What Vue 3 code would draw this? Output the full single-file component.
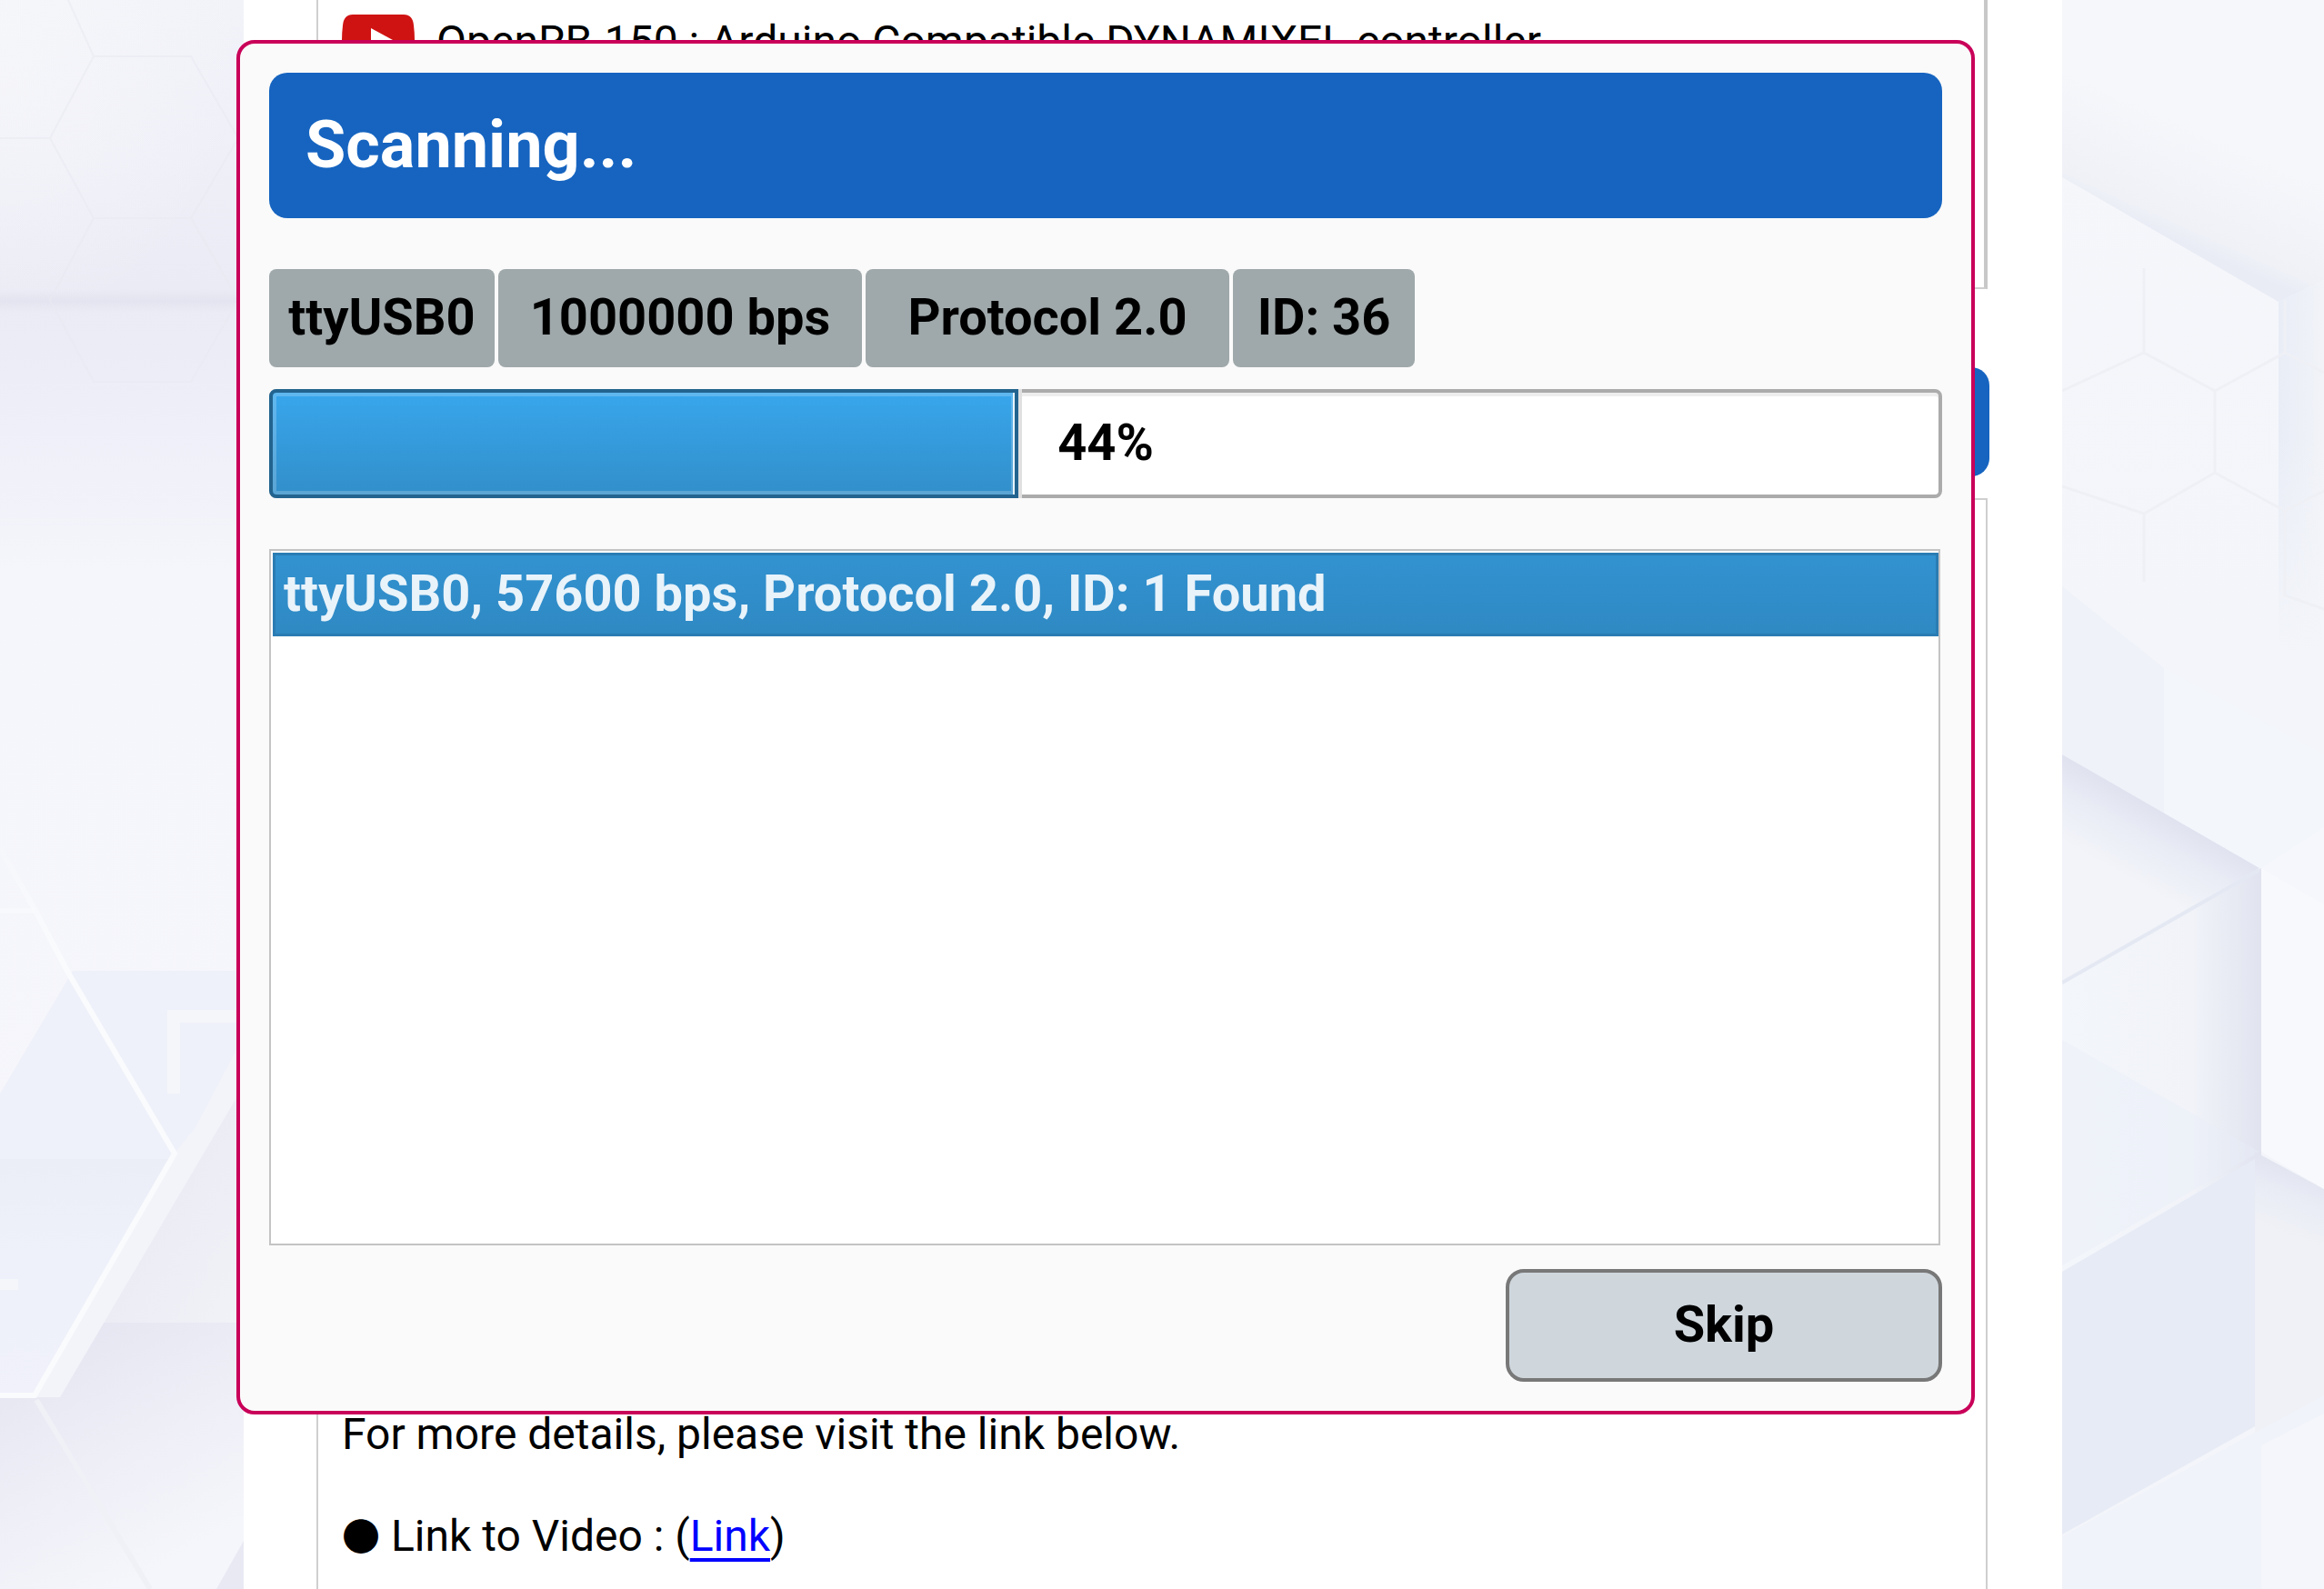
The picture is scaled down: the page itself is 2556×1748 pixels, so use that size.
<script setup>
import { ref, computed } from 'vue'

const port = 'ttyUSB0'
const chips = [
  { text: port, size: 'mid' },
  { text: '1000000 bps', size: 'wide' },
  { text: 'Protocol 2.0', size: 'wide' },
  { text: 'ID: 36', size: 'small' }
]
const progress = ref(44)
const found = ['ttyUSB0, 57600 bps, Protocol 2.0, ID: 1 Found']
const selected = ref(0)
const fillWidth = computed(() => `calc(${progress.value}% + 18px)`)
</script>

<template>
  <div class="screen">
    <svg class="backdrop" viewBox="0 0 268 1748" preserveAspectRatio="xMaxYMin slice" aria-hidden="true">
      <defs>
        <linearGradient id="l-base" x1="0" y1="0" x2="0" y2="1">
          <stop offset="0" stop-color="#f2f3f9" />
          <stop offset=".1" stop-color="#efeff8" />
          <stop offset=".18" stop-color="#ebebf5" />
          <stop offset=".22" stop-color="#ececf7" />
          <stop offset=".27" stop-color="#eeeff8" />
          <stop offset=".36" stop-color="#f5f6fb" />
          <stop offset="1" stop-color="#f6f6fb" />
        </linearGradient>
        <radialGradient id="l-glow" cx="0" cy=".1" r="1">
          <stop offset="0" stop-color="#f7f8fa" stop-opacity=".7" />
          <stop offset="1" stop-color="#f7f8fa" stop-opacity="0" />
        </radialGradient>
        <linearGradient id="l-line" x1="0" y1="0" x2="0" y2="1">
          <stop offset="0" stop-color="#e4e4f0" stop-opacity="0" />
          <stop offset=".5" stop-color="#e4e4f0" />
          <stop offset="1" stop-color="#e4e4f0" stop-opacity="0" />
        </linearGradient>
        <linearGradient id="l-ray" x1="0" y1="933" x2="40" y2="1060" gradientUnits="userSpaceOnUse">
          <stop offset="0" stop-color="#fafbfd" stop-opacity=".2" />
          <stop offset="1" stop-color="#fafbfd" />
        </linearGradient>
        <linearGradient id="l-hex" x1="0" y1="0" x2="0" y2="1">
          <stop offset="0" stop-color="#ebeef7" />
          <stop offset=".4" stop-color="#eef1fa" />
          <stop offset="1" stop-color="#f0f1fa" />
        </linearGradient>
        <linearGradient id="l-side" x1="0" y1="0" x2="1" y2="1">
          <stop offset="0" stop-color="#e9e9f5" />
          <stop offset=".5" stop-color="#ececf5" />
          <stop offset="1" stop-color="#f1f2f7" />
        </linearGradient>
        <linearGradient id="l-floor" x1="0" y1="0" x2=".5" y2="1">
          <stop offset="0" stop-color="#e2e3ef" />
          <stop offset=".4" stop-color="#ebebf5" />
          <stop offset="1" stop-color="#f5f6fb" />
        </linearGradient>
      </defs>
      <rect width="268" height="1748" fill="url(#l-base)" />
      <rect width="268" height="330" fill="url(#l-glow)" />
      <rect y="318" width="268" height="26" fill="url(#l-line)" />
      <path d="M0 152H55L103 62H210L262 152L210 240H103L55 152M103 240L55 330L103 420H210L262 330L210 240M103 62L75 0" fill="none" stroke="#e9e9f2" stroke-width="2" opacity=".6" />
      <path d="M80 1068H268V1203L116 1455H0V1203Z" fill="#eff1fa" />
      <path d="M0 1275H190L40 1534H0Z" fill="url(#l-hex)" />
      <path d="M268 1190V1455H112Z" fill="url(#l-side)" />
      <path d="M114 1455H268V1748H0V1536H66Z" fill="url(#l-floor)" />
      <path d="M192 1269L215 1240L268 1140V1194L66 1537H38Z" fill="#f3f4f9" />
      <g fill="none" stroke="#f5f6fa">
        <path d="M191 1203V1118H268" stroke-width="14" />
        <path d="M0 1413H20" stroke-width="12" />
        <path d="M0 1002H38" stroke-width="5" stroke="#f8f9fc" />
        <path d="M40 1540L165 1748" stroke="#f0f1f7" stroke-width="6" />
        <path d="M0 933L38 1000L75 1070L192 1269L38 1535H0" stroke="url(#l-ray)" stroke-width="6" />
      </g>
      <path d="M268 1695V1748H238Z" fill="#e9e9f4" />
    </svg>

    <main class="page">
      <section class="panel panel-top">
        <svg class="video-icon" viewBox="0 0 80 56" aria-hidden="true">
          <path d="M12 0H68Q78 0 79 12Q81 28 79 44Q78 56 68 56H12Q2 56 1 44Q-1 28 1 12Q2 0 12 0Z" fill="#cf1312" />
          <path d="M32 15L56 28L32 41Z" fill="#fff" />
        </svg>
        <span>OpenRB-150 : Arduino Compatible DYNAMIXEL controller</span>
      </section>
      <div class="section-bar"></div>
      <section class="panel panel-bottom">
        <p>For more details, please visit the link below.</p>
        <p><span class="dot">●</span> Link to Video : (<a href="#">Link</a>)</p>
      </section>
    </main>

    <svg class="backdrop" viewBox="0 0 288 1748" preserveAspectRatio="xMinYMin slice" aria-hidden="true">
      <defs>
        <linearGradient id="r-base" x1="0" y1="0" x2="0" y2="1">
          <stop offset="0" stop-color="#f6f7fb" />
          <stop offset=".4" stop-color="#f3f5fa" />
          <stop offset="1" stop-color="#f3f5fa" />
        </linearGradient>
        <linearGradient id="r-slope" x1="120" y1="262" x2="170" y2="150" gradientUnits="userSpaceOnUse">
          <stop offset="0" stop-color="#e9ecf5" />
          <stop offset=".15" stop-color="#eff1f7" />
          <stop offset="1" stop-color="#f5f7fb" />
        </linearGradient>
        <linearGradient id="r-edge" x1="0" y1="0" x2="1" y2="0">
          <stop offset="0" stop-color="#e9edf6" />
          <stop offset="1" stop-color="#f1f3f8" />
        </linearGradient>
        <linearGradient id="r-fade" x1="0" y1="0" x2="0" y2="1">
          <stop offset="0" stop-color="#f3f5fa" stop-opacity="0" />
          <stop offset="1" stop-color="#f3f5fa" />
        </linearGradient>
        <linearGradient id="r-top" x1="110" y1="893" x2="70" y2="965" gradientUnits="userSpaceOnUse">
          <stop offset="0" stop-color="#e0e3ef" />
          <stop offset=".4" stop-color="#e9ecf5" />
          <stop offset="1" stop-color="#f2f4f9" />
        </linearGradient>
        <linearGradient id="r-face" x1="0" y1="0" x2="1" y2="0">
          <stop offset="0" stop-color="#f3f6fb" />
          <stop offset=".65" stop-color="#f1f3f9" />
          <stop offset="1" stop-color="#e1e4ef" />
        </linearGradient>
        <linearGradient id="r-low" x1="250" y1="1284" x2="225" y2="1350" gradientUnits="userSpaceOnUse">
          <stop offset="0" stop-color="#e2e5f0" />
          <stop offset=".4" stop-color="#e9ecf5" />
          <stop offset="1" stop-color="#eff1f6" />
        </linearGradient>
      </defs>
      <rect width="288" height="1748" fill="url(#r-base)" />
      <path d="M0 0H288V308L238 332L0 195Z" fill="url(#r-slope)" />
      <path d="M238 332L288 308V720H238Z" fill="url(#r-edge)" />
      <rect x="236" y="480" width="52" height="242" fill="url(#r-fade)" />
      <path d="M90 295V388L168 430V520L90 565L0 535M90 388L0 430M168 430L245 388L288 410M168 520L245 562L288 540M245 562V655L288 670M90 565V640M245 388V330" fill="none" stroke="#eef0f6" stroke-width="3" />
      <path d="M0 645L112 735V895L0 830Z" fill="#eff2f8" />
      <path d="M112 735L288 830V995L217 955L112 895Z" fill="#f3f6fb" />
      <path d="M0 830L217 955L0 1081Z" fill="url(#r-top)" />
      <path d="M0 1081L219 955V1275L0 1399Z" fill="url(#r-face)" />
      <path d="M0 1144L217 1267L0 1392Z" fill="#e9edf7" opacity=".4" />
      <path d="M0 1081L217 957" stroke="#e4e8f2" stroke-width="4" />
      <path d="M219 955L288 910V995Z" fill="#f5f7fc" />
      <path d="M212 1267L288 1308V1560L212 1600Z" fill="url(#r-low)" />
      <path d="M219 955L288 995V1308L219 1267Z" fill="#f8f9fd" />
      <path d="M0 1399L212 1275V1569L0 1688Z" fill="#e7ebf5" />
      <path d="M0 1690L288 1535V1748H0Z" fill="#f0f3f9" />
      <path d="M219 1590L288 1555V1748H219Z" fill="#f4f6fb" />
    </svg>

    <section class="dialog" role="dialog" aria-labelledby="scan-title">
      <h1 id="scan-title">Scanning...</h1>
      <div class="chips">
        <span v-for="c in chips" :key="c.text" class="chip" :class="c.size">{{ c.text }}</span>
      </div>
      <div class="progress" role="progressbar" :aria-valuenow="progress" aria-valuemin="0" aria-valuemax="100">
        <div class="fill" :style="{ width: fillWidth }"></div>
        <span class="percent">{{ progress }}%</span>
      </div>
      <ul class="results">
        <li v-for="(r, i) in found" :key="r" :class="{ active: i === selected }">{{ r }}</li>
      </ul>
      <button type="button" class="skip">Skip</button>
    </section>
  </div>
</template>

<style>
body {
  margin: 0;
}
</style>

<style scoped>
.screen {
  position: relative;
  display: grid;
  grid-template-columns: 268px 1fr 288px;
  height: 100vh;
  overflow: hidden;
  background: #fff;
  color: #000;
  font-family: Roboto, "Liberation Sans", sans-serif;
  font-size: 56px;
  line-height: 66px;
}
.screen * {
  box-sizing: border-box;
}
.backdrop {
  display: block;
  width: 100%;
  height: 100%;
}
.page {
  display: flex;
  flex-direction: column;
  min-width: 0;
  padding: 0 80px;
  background: #fff;
  font-size: 48px;
  line-height: 56px;
}
.panel {
  border: 2px solid #cfcfcf;
  margin-right: 2px;
  padding: 16px 26px;
}
.panel-top {
  display: flex;
  align-items: flex-start;
  gap: 24px;
  height: 318px;
  border-top: 0;
  border-right: 4px solid #c8c8c8;
}
.panel-top span {
  line-height: 60px;
}
.video-icon {
  width: 80px;
  height: 56px;
}
.section-bar {
  height: 120px;
  margin: 86px 0 24px;
  border-radius: 20px;
  background: #1664c0;
}
.panel-bottom {
  display: flex;
  flex: 1;
  flex-direction: column;
  justify-content: flex-end;
  gap: 56px;
  padding-bottom: 30px;
  border-bottom: 0;
}
.panel-bottom p {
  margin: 0;
}
.dot {
  font-family: "Noto Sans CJK SC", sans-serif;
  font-size: 42px;
  line-height: 1;
}
a {
  color: #00f;
  text-decoration-thickness: 4px;
  text-underline-offset: 8px;
}
.dialog {
  position: absolute;
  top: 44px;
  left: 260px;
  right: 384px;
  display: flex;
  flex-direction: column;
  padding: 32px;
  border: 4px solid #c90059;
  border-radius: 20px;
  background: #fafafa;
  font-weight: 700;
}
h1 {
  margin: 0 0 56px;
  padding: 38px 40px;
  border-radius: 20px;
  background: #1664c0;
  color: #fff;
  font-size: 72px;
  line-height: 84px;
}
.chips {
  display: flex;
  gap: 4px;
  margin-bottom: 24px;
}
.chip {
  padding: 20px 0 22px;
  border-radius: 8px;
  background: #9fa8aa;
  text-align: center;
}
.mid {
  width: 248px;
}
.wide {
  width: 400px;
}
.small {
  width: 200px;
}
.progress {
  position: relative;
  display: flex;
  align-items: center;
  justify-content: center;
  height: 120px;
  margin-bottom: 56px;
  padding-bottom: 2px;
  border: 4px solid #ababab;
  border-radius: 8px;
  background: #fff;
  box-shadow: inset 0 4px #eee;
}
.fill {
  position: absolute;
  top: -4px;
  bottom: -4px;
  left: -4px;
  border: 4px solid #22648f;
  border-radius: 8px 0 0 8px;
  background: linear-gradient(#38a6ec, #328fca);
  box-shadow: inset -2px 0 #e6f3fb, inset 0 0 0 4px rgba(255, 255, 255, 0.2), 4px 0 #e0e0e0;
}
.percent {
  position: relative;
}
.results {
  height: 766px;
  margin: 0 2px 26px 0;
  padding: 2px 0 2px 2px;
  border: 2px solid #c4c4c4;
  background: #fff;
  list-style: none;
}
.results li {
  padding: 12px 12px 14px;
}
.results .active {
  border: 3px solid #2a7cb3;
  padding: 9px 9px 11px;
  background: linear-gradient(#3292d0, #2f89c3);
  color: #e9f3fa;
}
.skip {
  align-self: flex-end;
  width: 480px;
  height: 124px;
  padding: 0 0 2px;
  border: 4px solid #787878;
  border-radius: 20px;
  background: #cfd7dd;
  color: #000;
  font: inherit;
}
</style>
